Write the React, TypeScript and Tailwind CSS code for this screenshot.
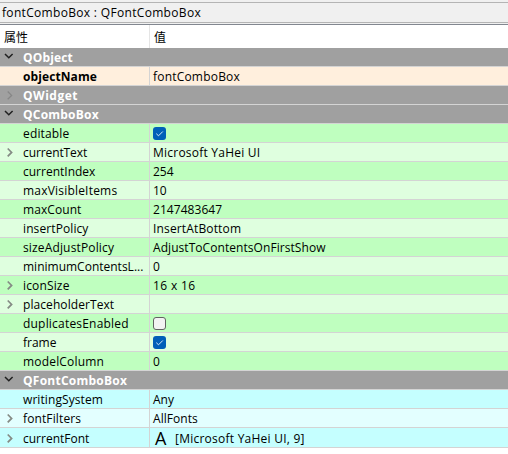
import React from 'react';

type Row = {
  name: string;
  value?: string;
  kind?: 'group' | 'check' | 'font';
  checked?: boolean;
  arrow?: 'open' | 'closed' | 'faint';
  bg: string;
  bold?: boolean;
  nameTrack?: string;
  valueTrack?: string;
};

const G1 = 'bg-[#bfffbf]';
const G2 = 'bg-[#dfffdf]';
const C1 = 'bg-[#c5ffff]';
const C2 = 'bg-[#e3ffff]';
const GR = 'bg-[#a0a0a0]';

const rows: Row[] = [
  { name: 'QObject', kind: 'group', arrow: 'open', bg: GR, nameTrack: 'tracking-[0.15px]' },
  { name: 'objectName', value: 'fontComboBox', bg: 'bg-[#ffefdd]', bold: true, nameTrack: 'tracking-[0.1px]', valueTrack: 'tracking-[0.2px]' },
  { name: 'QWidget', kind: 'group', arrow: 'faint', bg: GR, nameTrack: 'tracking-[0.5px]' },
  { name: 'QComboBox', kind: 'group', arrow: 'open', bg: GR, nameTrack: 'tracking-[0.22px]' },
  { name: 'editable', kind: 'check', checked: true, bg: G1, nameTrack: 'tracking-[0.15px]' },
  { name: 'currentText', value: 'Microsoft YaHei UI', arrow: 'closed', bg: G2, nameTrack: 'tracking-[-0.1px]', valueTrack: 'tracking-[0.23px]' },
  { name: 'currentIndex', value: '254', bg: G1 },
  { name: 'maxVisibleItems', value: '10', bg: G2, nameTrack: 'tracking-[0.2px]' },
  { name: 'maxCount', value: '2147483647', bg: G1, nameTrack: 'tracking-[0.08px]', valueTrack: 'tracking-[0.05px]' },
  { name: 'insertPolicy', value: 'InsertAtBottom', bg: G2, nameTrack: 'tracking-[0.1px]', valueTrack: 'tracking-[0.15px]' },
  { name: 'sizeAdjustPolicy', value: 'AdjustToContentsOnFirstShow', bg: G1, nameTrack: 'tracking-[0.15px]', valueTrack: 'tracking-[0.06px]' },
  { name: 'minimumContentsL...', value: '0', bg: G2 },
  { name: 'iconSize', value: '16 x 16', arrow: 'closed', bg: G1, nameTrack: 'tracking-[0.15px]', valueTrack: 'tracking-[0.35px]' },
  { name: 'placeholderText', value: '', arrow: 'closed', bg: G2, nameTrack: 'tracking-[0.08px]' },
  { name: 'duplicatesEnabled', kind: 'check', checked: false, bg: G1, nameTrack: 'tracking-[0.2px]' },
  { name: 'frame', kind: 'check', checked: true, bg: G2 },
  { name: 'modelColumn', value: '0', bg: G1, nameTrack: 'tracking-[0.18px]' },
  { name: 'QFontComboBox', kind: 'group', arrow: 'open', bg: GR, nameTrack: 'tracking-[0.25px]' },
  { name: 'writingSystem', value: 'Any', bg: C1, nameTrack: 'tracking-[0.08px]' },
  { name: 'fontFilters', value: 'AllFonts', arrow: 'closed', bg: C2, nameTrack: 'tracking-[0.12px]', valueTrack: 'tracking-[0.06px]' },
  { name: 'currentFont', value: '[Microsoft YaHei UI, 9]', kind: 'font', arrow: 'closed', bg: C1, valueTrack: 'tracking-[0.24px]' },
];

function Arrow({ type }: { type?: Row['arrow'] }) {
  if (!type) return null;
  if (type === 'open') {
    return (
      <svg className="ml-1 h-[18px] w-[10px]" viewBox="0 0 10 18" fill="none" stroke="#202020" strokeWidth="1.5">
        <path d="M1 6 L4.8 9.7 L8.6 6" />
      </svg>
    );
  }
  return (
    <svg
      className="ml-1 h-[18px] w-[10px]"
      viewBox="0 0 10 18"
      fill="none"
      stroke={type === 'faint' ? '#868686' : '#858b85'}
      strokeWidth={type === 'faint' ? 1.3 : 1.7}
    >
      <path d="M3.7 5.5 L7.6 9.4 L3.7 13.3" />
    </svg>
  );
}

function Check({ checked }: { checked?: boolean }) {
  if (!checked) {
    return <span className="mt-px block size-[13px] rounded-[3px] border border-[#626262] bg-[#f3f3f3]" />;
  }
  return (
    <span className="mt-px block size-[13px] rounded-[3px] bg-[#005fb8]">
      <svg className="size-[13px]" viewBox="0 0 13 13" fill="none" stroke="#d5e8f8" strokeWidth="1">
        <path d="M3.3 6.7 L5.5 8.8 L9.8 4.5" />
      </svg>
    </span>
  );
}

function PropertyRow({ row }: { row: Row }) {
  const group = row.kind === 'group';
  return (
    <div className={`flex border-b border-[#d4d4d4] ${row.kind === 'font' ? 'h-5' : 'h-[19px]'} ${row.bg}`}>
      <div className={`flex items-center ${group ? 'w-full' : 'w-[150px] border-r border-[#d4d4d4]'}`}>
        <div className="flex h-full w-[23px] shrink-0 items-center">
          <Arrow type={row.arrow} />
        </div>
        <span className={`whitespace-nowrap pt-[2px] ${group ? 'font-bold text-white' : ''} ${row.bold ? 'font-bold' : ''} ${row.nameTrack ?? ''}`}>
          {row.name}
        </span>
      </div>
      {!group && (
        <div className="flex flex-1 items-center pl-[3px]">
          {row.kind === 'check' && <Check checked={row.checked} />}
          {row.kind === 'font' && <span className="w-[22px] pl-[2px] pt-px text-[18px] leading-[18px]">A</span>}
          <span className={`whitespace-nowrap pt-[2px] ${row.valueTrack ?? ''}`}>{row.value}</span>
        </div>
      )}
    </div>
  );
}

export default function App() {
  return (
    <div className="h-[454px] w-[508px] overflow-hidden bg-white font-['Open_Sans','Noto_Sans_CJK_SC',sans-serif] text-[12px] leading-[18px] text-black">
      <div className="h-[2px] bg-[#f0f0f0]" />
      <div className="flex h-[21px] items-center border-y border-[#b4b4b4] bg-[#f0f0f0] pl-[2px]">
        <span className="tracking-[0.32px]">fontComboBox : QFontComboBox</span>
      </div>
      <div className="h-px bg-[#f0f0f0]" />
      <div className="flex h-6 border-t border-[#828790] bg-white font-['Noto_Sans_CJK_SC',sans-serif]">
        <div className="flex w-[150px] items-center border-r border-[#e5e5e5] pl-[4px]">属性</div>
        <div className="flex items-center pl-[4px]">值</div>
      </div>
      {rows.map((row) => (
        <PropertyRow key={row.name} row={row} />
      ))}
    </div>
  );
}
